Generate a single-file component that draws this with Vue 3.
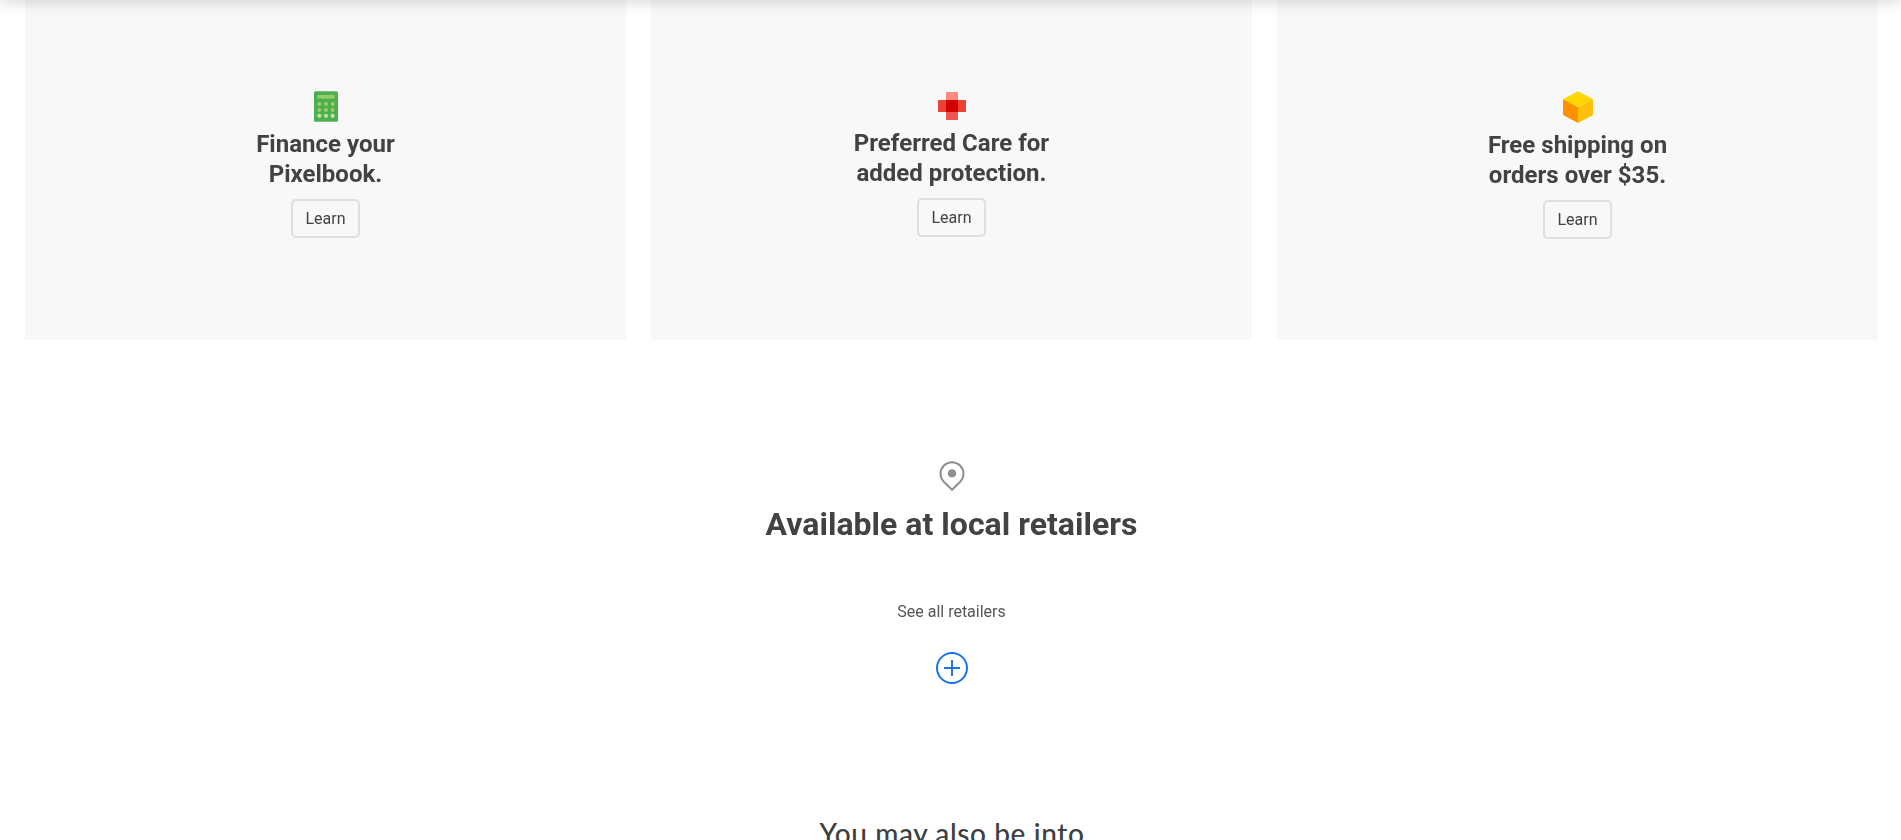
<script setup>
const cards = [
  { icon: 'calculator', lines: ['Finance your', 'Pixelbook.'] },
  { icon: 'care', lines: ['Preferred Care for', 'added protection.'] },
  { icon: 'box', lines: ['Free shipping on', 'orders over $35.'] },
]
</script>

<template>
  <div class="page">
    <div class="header-shadow"></div>
    <section class="cards">
      <article v-for="card in cards" :key="card.icon" class="card" :class="card.icon">
        <svg v-if="card.icon === 'calculator'" class="icon" width="24" height="31" viewBox="0 0 24 31">
          <rect y=".3" width="24" height="30.5" rx="1.6" fill="#4caf50" />
          <rect x="3.2" y="4" width="17.4" height="3.6" fill="#9ccc65" />
          <g fill="#9ccc65">
            <circle cx="5.4" cy="13.1" r="2" /><circle cx="12" cy="13.1" r="2" /><circle cx="18.6" cy="13.1" r="2" />
            <circle cx="5.4" cy="19" r="2" /><circle cx="12" cy="19" r="2" /><circle cx="18.6" cy="19" r="2" />
          </g>
          <g fill="#c5e1a5">
            <circle cx="5.4" cy="24.8" r="2.1" /><circle cx="12" cy="24.8" r="2.1" /><circle cx="18.6" cy="24.8" r="2.1" />
          </g>
        </svg>
        <svg v-else-if="card.icon === 'care'" class="icon" width="28" height="28" viewBox="0 0 28 28">
          <path d="M8 8V.8Q8 0 8.8 0H19.2Q20 0 20 .8V8Z" fill="#ff8a80" />
          <path d="M8 20V27.2Q8 28 8.8 28H19.2Q20 28 20 27.2V20Z" fill="#ef5350" />
          <rect y="8" width="28" height="12" rx=".8" fill="#ea4335" />
          <rect x="8" y="8" width="12" height="12" fill="#d50000" />
        </svg>
        <svg v-else class="icon" width="30" height="32" viewBox="0 0 30 32">
          <path d="M15 .3L30 8.3L15 16.3L0 8.3Z" fill="#ffd600" />
          <path d="M0 8.3L15 16.3V32L0 24Z" fill="#ff9100" />
          <path d="M30 8.3L15 16.3V32L30 24Z" fill="#ffc107" />
        </svg>
        <h3>{{ card.lines[0] }}<br />{{ card.lines[1] }}</h3>
        <button type="button">Learn</button>
      </article>
    </section>

    <section class="retailers">
      <svg class="pin" width="26" height="31" viewBox="0 0 26 31" fill="none">
        <path d="M13 28.8L4.8 20.7A11.5 11.5 0 1 1 21.2 20.7Z" stroke="#8c9093" stroke-width="2" />
        <circle cx="13" cy="12.4" r="4.2" fill="#8c9093" />
      </svg>
      <h2>Available at local retailers</h2>
      <p>See all retailers</p>
      <svg class="plus" width="32" height="32" viewBox="0 0 32 32" fill="none" stroke="#1a73e8" stroke-width="2">
        <circle cx="16" cy="16" r="15" />
        <path d="M16 8V24M8 16H24" />
      </svg>
    </section>

    <h2 class="also">You may also be into</h2>
  </div>
</template>

<style>
body {
  background: #fff;
  overflow: hidden;
}
</style>

<style scoped>
.page {
  height: 840px;
  overflow: hidden;
  position: relative;
  font-family: Roboto, "Liberation Sans", sans-serif;
  color: #424242;
}
.header-shadow {
  position: absolute;
  z-index: 1;
  left: 0;
  right: 0;
  top: -20px;
  height: 20px;
  box-shadow: 0 1px 16px rgba(0, 0, 0, 0.18);
}
.cards {
  display: grid;
  grid-template-columns: repeat(3, 601px);
  gap: 25px;
  padding-left: 25px;
  will-change: transform;
}
.card {
  height: 340px;
  box-sizing: border-box;
  padding-top: 91px;
  background: #f8f8f8;
  display: flex;
  flex-direction: column;
  align-items: center;
}
.card.care {
  padding-top: 92px;
}
.icon {
  display: block;
  flex: none;
}
h3 {
  margin: 7px 0 0;
  font-size: 24px;
  line-height: 30px;
  font-weight: 660;
  letter-spacing: 0.02px;
  text-align: center;
}
button {
  margin-top: 10px;
  width: 69px;
  height: 39px;
  padding: 0;
  box-sizing: border-box;
  border: 2px solid #dfdfdf;
  border-radius: 5px;
  background: transparent;
  color: #424242;
  font: 450 16px/24px Roboto, "Liberation Sans", sans-serif;
}
.care h3 {
  margin-top: 8px;
}
.retailers {
  display: flex;
  flex-direction: column;
  align-items: center;
  padding: 121px 0 0 2px;
  will-change: transform;
}
.pin,
.plus {
  display: block;
}
.retailers h2 {
  margin: 12px 0 0;
  font-size: 32px;
  line-height: 40px;
  font-weight: 660;
  letter-spacing: 0.02px;
}
.retailers p {
  margin: 56px 0 0;
  font-size: 16px;
  line-height: 24px;
  font-weight: 400;
  color: #555;
}
.plus {
  margin-top: 28px;
}
.also {
  margin: 131px 0 0;
  padding-left: 14px;
  padding-right: 11px;
  text-align: center;
  font-family: Lato, sans-serif;
  font-size: 28px;
  line-height: 36px;
  font-weight: 500;
  letter-spacing: 0.62px;
  color: #3c4043;
}
</style>
